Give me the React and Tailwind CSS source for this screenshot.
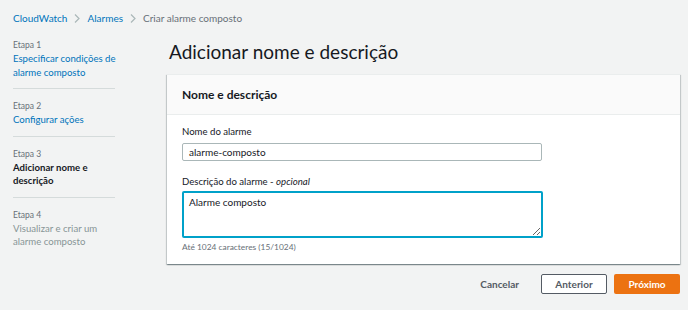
import React from "react";

function Chevron() {
  return (
    <svg width="6" height="11" viewBox="0 0 6 11" className="mx-[7px]">
      <polyline points="1,1.5 5,5.5 1,9.5" fill="none" stroke="#aab7b8" strokeWidth="1.2" />
    </svg>
  );
}

function Step({ n, lines, state, first }) {
  const color =
    state === "done" ? "text-[#0073bb]" : state === "current" ? "text-[#16191f] font-bold" : "text-[#879596]";
  return (
    <div className={first ? "pt-[2px] pb-[9px]" : "border-t border-[#d5dbdb] pt-[10px] pb-[9px]"}>
      <div className="text-[8.5px] leading-[14px] text-[#687078]">Etapa {n}</div>
      <div className={`text-[9.6px] leading-[13.5px] whitespace-nowrap ${color}`}>
        {lines.map((l, i) => (
          <div key={i}>{l}</div>
        ))}
      </div>
    </div>
  );
}

export default function App() {
  return (
    <div
      className="w-[688px] h-[310px] bg-[#f2f3f3] overflow-hidden"
      style={{ fontFamily: "Lato, 'Liberation Sans', sans-serif" }}
    >
      <div className="h-[36px] flex items-center pl-[13px] text-[10px]">
        <span className="text-[#0073bb]">CloudWatch</span>
        <Chevron />
        <span className="text-[#0073bb]">Alarmes</span>
        <Chevron />
        <span className="text-[#687078]">Criar alarme composto</span>
      </div>
      <div className="flex">
        <div className="w-[102px] ml-[13px] shrink-0">
          <Step n={1} first state="done" lines={["Especificar condições de", "alarme composto"]} />
          <Step n={2} state="done" lines={["Configurar ações"]} />
          <Step n={3} state="current" lines={["Adicionar nome e", "descrição"]} />
          <Step n={4} state="todo" lines={["Visualizar e criar um", "alarme composto"]} />
        </div>
        <div className="ml-[52px] w-[513px]">
          <h1 className="pt-[2px] pl-[2px] text-[19px] leading-[28px] font-normal text-[#16191f]">
            Adicionar nome e descrição
          </h1>
          <div className="mt-[8px] bg-white shadow-[0_1px_1px_0_rgba(0,28,36,0.3),1px_1px_1px_0_rgba(0,28,36,0.15),-1px_1px_1px_0_rgba(0,28,36,0.15)] border-t border-[#eaeded]">
            <div className="h-[40px] bg-[#fafafa] border-b border-[#eaeded] flex items-center px-[15px]">
              <span className="text-[12px] font-bold text-[#16191f]">Nome e descrição</span>
            </div>
            <div className="px-[15px] pt-[10px] pb-[11px]">
              <div className="text-[9.6px] leading-[14px] text-[#16191f]">Nome do alarme</div>
              <div className="mt-[4px] w-[360px] h-[18px] border border-[#aab7b8] rounded-[2px] flex items-center px-[6px] text-[10px] text-[#16191f]">
                alarme-composto
              </div>
              <div className="mt-[14px] text-[9.6px] leading-[14px] text-[#16191f]">
                Descrição do alarme - <i>opcional</i>
              </div>
              <textarea
                defaultValue="Alarme composto"
                className="block mt-[2px] w-[361px] h-[47px] border-2 border-[#00a1c9] rounded-[2px] px-[5px] pt-[2px] text-[10px] leading-[14px] text-[#16191f] outline-none"
                style={{ fontFamily: "Lato, 'Liberation Sans', sans-serif" }}
              />
              <div className="mt-[3px] text-[8.4px] leading-[12px] text-[#687078]">Até 1024 caracteres (15/1024)</div>
            </div>
          </div>
          <div className="mt-[10px] flex justify-end items-center gap-[7px]">
            <span className="text-[10px] font-bold text-[#545b64] mr-[15px]">Cancelar</span>
            <div className="w-[66px] h-[20px] border border-[#545b64] bg-white rounded-[2px] flex items-center justify-center text-[10px] font-bold text-[#545b64]">
              Anterior
            </div>
            <div className="w-[66px] h-[20px] bg-[#ec7211] rounded-[2px] flex items-center justify-center text-[10px] font-bold text-white">
              Próximo
            </div>
          </div>
        </div>
      </div>
    </div>
  );
}
